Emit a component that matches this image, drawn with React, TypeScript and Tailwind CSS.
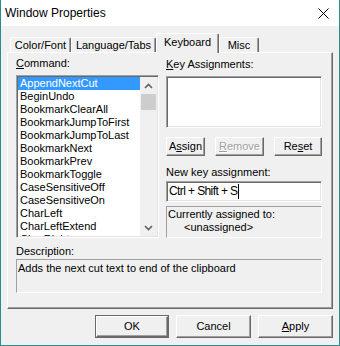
import React from 'react';

const commands = [
  'AppendNextCut',
  'BeginUndo',
  'BookmarkClearAll',
  'BookmarkJumpToFirst',
  'BookmarkJumpToLast',
  'BookmarkNext',
  'BookmarkPrev',
  'BookmarkToggle',
  'CaseSensitiveOff',
  'CaseSensitiveOn',
  'CharLeft',
  'CharLeftExtend',
  'CharRight',
];

// sunken white field (list box, edit box)
const sunken =
  'border-t border-l border-t-[#a0a0a0] border-l-[#a0a0a0] border-b border-r border-b-white border-r-white shadow-[inset_1px_1px_0_#696969,inset_-1px_-1px_0_#e3e3e3]';

// sunken static frame
const frame =
  'border-t border-l border-t-[#a0a0a0] border-l-[#a0a0a0] border-b border-r border-b-white border-r-white';

const raised =
  'border-t border-l border-t-white border-l-white border-b border-r border-b-[#696969] border-r-[#696969] shadow-[inset_-1px_-1px_0_#a0a0a0]';

function Chevron({ up }: { up?: boolean }) {
  return (
    <svg width="9" height="6" viewBox="0 0 9 6">
      <polyline
        points={up ? '1,5 4.5,1.5 8,5' : '1,1 4.5,4.5 8,1'}
        fill="none"
        stroke="#606060"
        strokeWidth="1.6"
      />
    </svg>
  );
}

function Tab({ label, active, w }: { label: string; active?: boolean; w: string }) {
  return (
    <div
      className={`${w} flex items-center justify-center border-t border-l border-t-white border-l-white border-r border-r-[#696969] shadow-[inset_-1px_0_0_#a0a0a0] rounded-t-[2px] bg-[#f0f0f0] ${
        active ? 'h-[20px] -mb-[1px] relative z-10 pb-[2px]' : 'h-[15px]'
      }`}
    >
      {label}
    </div>
  );
}

function Button({ children, w, def, disabled }: { children: React.ReactNode; w: string; def?: boolean; disabled?: boolean }) {
  const inner = (
    <div className={`flex-1 flex items-center justify-center ${raised} bg-[#f0f0f0]`}>
      <span className={disabled ? 'text-[#a0a0a0] [text-shadow:1px_1px_0_#fff]' : ''}>{children}</span>
    </div>
  );
  if (def) {
    return <div className={`${w} flex border border-[#696969]`}>{inner}</div>;
  }
  return <div className={`${w} flex`}>{inner}</div>;
}

export default function App() {
  return (
    <div className="w-[340px] h-[346px] flex flex-col bg-[#f0f0f0] border-l border-r border-b border-[#268d8d] font-['Liberation_Sans',Arial,sans-serif] text-[11px] text-black leading-[13px] overflow-hidden">
      {/* title bar */}
      <div className="h-[26px] shrink-0 bg-white flex items-center justify-between pl-[4px] pr-[10px]">
        <span className="text-[12px]">Window Properties</span>
        <svg width="11" height="11" viewBox="0 0 11 11">
          <line x1="0.5" y1="0.5" x2="10.5" y2="10.5" stroke="#000" strokeWidth="1" />
          <line x1="10.5" y1="0.5" x2="0.5" y2="10.5" stroke="#000" strokeWidth="1" />
        </svg>
      </div>

      {/* tabs */}
      <div className="mt-[7px] h-[19px] flex items-end pl-[9px]">
        <Tab label="Color/Font" w="w-[61px]" />
        <Tab label="Language/Tabs" w="w-[85px]" />
        <Tab label="Keyboard" w="w-[63px]" active />
        <Tab label="Misc" w="w-[40px]" />
      </div>

      {/* tab panel */}
      <div className="ml-[6px] w-[326px] h-[257px] shrink-0 border-t border-l border-t-white border-l-white border-r border-b border-r-[#696969] border-b-[#696969] shadow-[inset_-1px_-1px_0_#a0a0a0] flex flex-col pl-[8px]">
        <div className="flex gap-[7px]">
          {/* command list */}
          <div className="w-[143px] flex flex-col">
            <div className="mt-[4px] h-[13px]">
              <span className="underline">C</span>ommand:
            </div>
            <div className={`mt-[5px] h-[163px] bg-white flex ${sunken} p-[1px]`}>
              <div className="flex-1 overflow-hidden flex flex-col">
                {commands.map((c, i) => (
                  <div
                    key={c}
                    className={`h-[13px] shrink-0 pl-[2px] whitespace-nowrap ${i === 0 ? 'bg-[#3399ff] text-white' : ''}`}
                  >
                    {c}
                  </div>
                ))}
              </div>
              <div className="w-[17px] bg-[#f0f0f0] flex flex-col">
                <div className="h-[17px] flex items-center justify-center">
                  <Chevron up />
                </div>
                <div className="mx-[1px] h-[16px] bg-[#cdcdcd]" />
                <div className="flex-1" />
                <div className="h-[17px] flex items-center justify-center">
                  <Chevron />
                </div>
              </div>
            </div>
          </div>

          {/* key assignments */}
          <div className="w-[156px] flex flex-col">
            <div className="mt-[5px] h-[13px]">
              <span className="underline">K</span>ey Assignments:
            </div>
            <div className={`mt-[5px] h-[52px] bg-white ${sunken}`} />
            <div className="mt-[9px] h-[19px] flex justify-between">
              <Button w="w-[39px]">
                A<span className="underline">s</span>sign
              </Button>
              <Button w="w-[49px]" disabled>
                <span className="underline">R</span>emove
              </Button>
              <Button w="w-[48px]">
                Re<span className="underline">s</span>et
              </Button>
            </div>
            <div className="mt-[10px] h-[13px]">New key assignment:</div>
            <div className={`mt-[2px] h-[21px] bg-white ${sunken} flex items-center pl-[2px] text-[12px] tracking-[-0.6px]`}>
              <span>Ctrl + Shift + S</span>
              <span className="w-[1px] h-[15px] bg-black ml-[1px]" />
            </div>
            <div className={`mt-[4px] h-[32px] ${frame} flex flex-col pl-[1px] pt-[1px]`}>
              <div className="h-[13px]">Currently assigned to:</div>
              <div className="h-[13px] pl-[16px]">&lt;unassigned&gt;</div>
            </div>
          </div>
        </div>

        <div className="mt-[7px] h-[13px]">Description:</div>
        <div className={`mt-[1px] w-[306px] h-[34px] ${frame} pl-[1px] pt-[2px]`}>
          Adds the next cut text to end of the clipboard
        </div>
      </div>

      {/* dialog buttons */}
      <div className="mt-[6px] h-[23px] flex justify-end gap-[7px] pr-[6px]">
        <Button w="w-[74px]" def>
          OK
        </Button>
        <Button w="w-[75px]">Cancel</Button>
        <Button w="w-[75px]">
          <span className="underline">A</span>pply
        </Button>
      </div>
    </div>
  );
}
